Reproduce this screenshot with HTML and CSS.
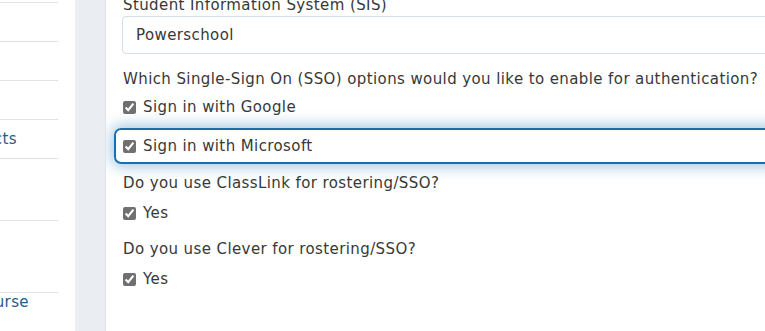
FILE: index.html
```html
<!DOCTYPE html>
<html lang="en">
<head>
    <meta charset="UTF-8">
    <meta name="viewport" content="width=device-width, initial-scale=1.0">
    <title>District Setup</title>
    <link rel="stylesheet" href="styles.css">
</head>
<body>
    <div id="container">
        <!-- Left nav, scrolled so only the ends of the labels show -->
        <div id="sidebar">
            <div class="nav-item"><span>Home</span></div>
            <div class="nav-item"><span>Users</span></div>
            <div class="nav-item"><span>Roles</span></div>
            <div class="nav-item districts"><span>Districts</span></div>
            <div class="nav-item tall"><span>Reports</span></div>
            <div class="nav-item taller"><span>Settings</span></div>
            <div class="nav-item course"><span>Course</span></div>
        </div>

        <div id="gutter"></div>

        <!-- Form -->
        <div id="main">
            <div class="form">
                <div class="field-label sis">Student Information System (SIS)</div>
                <input class="text-input" type="text" value="Powerschool">

                <div class="field-label question">Which Single-Sign On (SSO) options would you like to enable for authentication?</div>
                <label class="check-row first">
                    <input type="checkbox" checked> <span>Sign in with Google</span>
                </label>
                <label class="check-row focused">
                    <input type="checkbox" checked> <span>Sign in with Microsoft</span>
                </label>

                <div class="field-label question after-focus">Do you use ClassLink for rostering/SSO?</div>
                <label class="check-row">
                    <input type="checkbox" checked> <span>Yes</span>
                </label>

                <div class="field-label question">Do you use Clever for rostering/SSO?</div>
                <label class="check-row">
                    <input type="checkbox" checked> <span>Yes</span>
                </label>
            </div>
        </div>
    </div>
</body>
</html>
```

FILE: styles.css
```css
/* Reset margin for body */
body {
    margin: 0;
    overflow: hidden;
    font-family: "DejaVu Sans", sans-serif;
    letter-spacing: 0.4px;
    color: #383838;
}

#container {
    display: flex;
    height: 331px;
    overflow: hidden;
}

/* Left nav */
#sidebar {
    width: 58px;
    padding-right: 17px;
    flex-shrink: 0;
    background-color: #fff;
    padding-top: 2px;
}

.nav-item {
    height: 38px;
    border-top: 1px solid #dfe4ea;
    font-size: 15px;
    color: #245d8c;
    display: flex;
    align-items: center;
    justify-content: flex-end;
    overflow: hidden;
    white-space: nowrap;
}

.nav-item span {
    visibility: hidden; /* labels are scrolled out of view */
}

.nav-item.districts {
    padding-right: 41px;
}

.nav-item.districts span,
.nav-item.course span {
    visibility: visible;
}

.nav-item.tall {
    height: 61px;
}

.nav-item.taller {
    height: 71px;
}

.nav-item.course {
    padding-right: 29px;
    align-items: flex-start;
}

/* Grey strip between nav and content */
#gutter {
    width: 30px;
    flex-shrink: 0;
    background-color: #eaeef3;
    border-right: 1px solid #dde3e9;
}

#main {
    flex: 1;
    padding-left: 17px;
    background-color: #fff;
    overflow: hidden;
}

.form {
    width: 720px;
    margin-top: -6px;
}

.field-label {
    font-size: 15px;
    line-height: 22px;
    white-space: nowrap;
}

.field-label.question {
    margin-top: 14px;
}

.field-label.after-focus {
    margin-top: 8px;
}

.text-input {
    display: block;
    box-sizing: border-box;
    width: 700px;
    height: 38px;
    margin: 0 0 0 -1px;
    padding: 0 13px;
    border: 1px solid #d6dee6;
    border-radius: 4px;
    font-family: inherit;
    font-size: 15px;
    letter-spacing: 0.4px;
    color: #383838;
    outline: none;
}

.check-row {
    display: flex;
    align-items: center;
    gap: 7px;
    height: 22px;
    margin-top: 8px;
    font-size: 15px;
    white-space: nowrap;
}

.check-row.first {
    margin-top: 6px;
}

.check-row input {
    width: 13px;
    height: 13px;
    margin: 0;
    accent-color: #707070;
}

/* The row that has keyboard focus */
.check-row.focused {
    box-sizing: border-box;
    height: 36px;
    margin: 10px 0 0 -9px;
    padding-left: 7px;
    border: 2.5px solid #1670b0;
    border-radius: 7px;
    box-shadow: 0 0 14px 3px rgba(22, 112, 176, 0.38);
}
```
